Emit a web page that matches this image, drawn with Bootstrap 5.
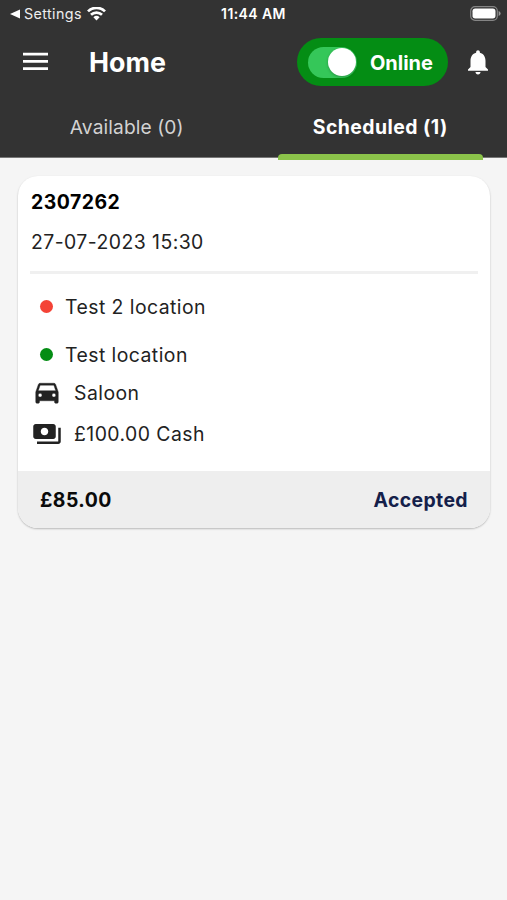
<!DOCTYPE html>
<html lang="en">
<head>
<meta charset="utf-8">
<meta name="viewport" content="width=device-width, initial-scale=1">
<title>Home</title>
<link href="https://cdn.jsdelivr.net/npm/bootstrap@5.3.0/dist/css/bootstrap.min.css" rel="stylesheet">
<style>
  body { font-family: Inter, "Liberation Sans", sans-serif; background: #f5f5f5; color: #222; min-height: 100vh; overflow-x: hidden; }
  svg { display: block; flex: none; }
  .top-area { background: #333; color: #fff; height: 158px; border-bottom: 1px solid #777; }
  .status-row { height: 28px; padding: 0 6px 0 10px; font-size: 14px; line-height: 28px; }
  .status-row > div { flex: 1 1 0; }
  .back-app { color: #eee; letter-spacing: .4px; font-size: 14.3px; }
  .clock { font-weight: 600; font-size: 14px; letter-spacing: .4px; margin-right: 4px; }
  .wifi { margin-left: 5px; }
  .app-row { height: 68px; padding: 0 14px 0 19px; }
  .page-title { font-size: 26.8px; font-weight: 700; margin: 0 0 0 38px; line-height: 32px; }
  .online-pill { width: 151px; height: 48px; border-radius: 24px; background: #048d14; padding: 0 15px 0 11px; font-size: 20px; font-weight: 700; }
  .online-text { padding-top: 1px; }
  .toggle-track { width: 49px; height: 31px; border-radius: 16px; background: #35c759; padding-right: 1px; }
  .toggle-thumb { width: 28px; height: 28px; border-radius: 50%; background: #fff; box-shadow: 0 1px 3px rgba(0,0,0,.25); }
  .bell { margin-left: 15px; }
  .tab-row { height: 62px; }
  .tab-row .nav-link { color: #d2d2d2; font-size: 19.2px; letter-spacing: .1px; line-height: 24px; padding: 19px 0 0; height: 62px; }
  .tab-row .nav-link.active { color: #fff; font-weight: 700; font-size: 19.4px; letter-spacing: .45px; }
  .tab-line { height: 6px; width: 205px; background: #8bc34a; border-radius: 4px 4px 0 0; margin: 15px auto 0; position: relative; }
  .job-card { margin: 18px 17px 0 18px; border: 0; border-radius: 20px; box-shadow: 0 1px 2px rgba(0,0,0,.25); overflow: hidden; font-size: 19.4px; letter-spacing: .45px; line-height: 24px; color: #222; }
  .job-top { height: 295px; padding: 14px 12px 0 12px; }
  .job-id, .job-date { padding-left: 1px; }
  .job-id { font-weight: 700; color: #000; letter-spacing: .5px; }
  .job-rule { height: 3px; background: #f0f0f0; margin-top: 17px; }
  .job-line span:last-child { padding-top: 3px; line-height: 21px; }
  .drop-off { margin-top: 20px; }
  .car-line, .pay-line { margin-top: 11px; }
  .job-line svg { margin: 0 12px 0 2px; }
  .pay-line svg { position: relative; top: 1px; }
  .dot { width: 13px; height: 13px; border-radius: 50%; margin: 0 12px 0 10px; }
  .dot-red { background: #f44336; }
  .dot-green { background: #048d14; }
  .job-foot { height: 57px; background: #eee; padding: 1px 22px 0 22px; font-weight: 700; color: #0a0a0a; }
  .state { color: #14204a; font-weight: 700; letter-spacing: .4px; }
</style>
</head>
<body>
<header class="top-area">
  <div class="status-row d-flex align-items-center">
    <div class="d-flex align-items-center">
      <svg width="10" height="10" viewBox="0 0 10 10"><path d="M0 5 10 .5v9z" fill="#fff"/></svg>
      <span class="back-app ms-1">Settings</span>
      <svg class="wifi" width="19" height="15" viewBox="0 0 19 15" fill="none" stroke="#fff" stroke-width="2.7"><path d="M1 4.4a12 12 0 0 1 17 0M4 7.8a7.8 7.8 0 0 1 11 0"/><path d="M9.5 13.5 6.4 10.3a4.5 4.5 0 0 1 6.2 0z" fill="#fff" stroke="none"/></svg>
    </div>
    <span class="clock">11:44 AM</span>
    <div class="d-flex justify-content-end">
      <svg width="31" height="17" viewBox="0 0 31 17"><rect x=".7" y=".7" width="26.6" height="13.6" rx="4.3" fill="none" stroke="#858585" stroke-width="1.2"/><rect x="2.5" y="2.5" width="23" height="10" rx="2.7" fill="#fff"/><path d="M28.6 5q2 .6 2 2.5t-2 2.5z" fill="#999"/></svg>
    </div>
  </div>
  <div class="app-row d-flex align-items-center">
    <svg width="32" height="32" viewBox="0 0 32 32" fill="#fff"><path d="M4 6.8h25v2.7H4zM4 14h25v2.7H4zM4 21.2h25v2.7H4z"/></svg>
    <h1 class="page-title">Home</h1>
    <div class="online-pill d-flex align-items-center justify-content-between ms-auto">
      <div class="toggle-track d-flex align-items-center justify-content-end"><div class="toggle-thumb"></div></div>
      <span class="online-text">Online</span>
    </div>
    <svg class="bell" width="30" height="30" viewBox="0 0 24 24" fill="#fff"><path d="M12 22c1.1 0 2-.9 2-2h-4c0 1.1.89 2 2 2zm6-6v-5c0-3.07-1.64-5.64-4.5-6.32V4c0-.83-.67-1.5-1.5-1.5s-1.5.67-1.5 1.5v.68C7.63 5.36 6 7.92 6 11v5l-2 2v1h16v-1z"/></svg>
  </div>
  <nav class="tab-row nav nav-justified flex-nowrap">
    <a class="nav-link col-6" href="#">Available (0)</a>
    <a class="nav-link col-6 active" href="#">Scheduled (1)<div class="tab-line"></div></a>
  </nav>
</header>
<main>
  <div class="card job-card">
    <div class="job-top">
      <div class="job-id">2307262</div>
      <div class="job-date mt-3">27-07-2023 15:30</div>
      <div class="job-rule"></div>
      <div class="job-line drop-off d-flex align-items-center"><span class="dot dot-red"></span><span>Test 2 location</span></div>
      <div class="job-line d-flex align-items-center mt-4"><span class="dot dot-green"></span><span>Test location</span></div>
      <div class="job-line car-line d-flex align-items-center"><svg width="30" height="30" viewBox="0 0 24 24" fill="#222"><path stroke="#222" stroke-width=".35" d="M18.92 6.01C18.72 5.42 18.16 5 17.5 5h-11c-.66 0-1.21.42-1.42 1.01L3 12v8c0 .55.45 1 1 1h1c.55 0 1-.45 1-1v-1h12v1c0 .55.45 1 1 1h1c.55 0 1-.45 1-1v-8zM6.5 16c-.83 0-1.5-.67-1.5-1.5S5.67 13 6.5 13s1.5.67 1.5 1.5S7.33 16 6.5 16zm11 0c-.83 0-1.5-.67-1.5-1.5s.67-1.5 1.5-1.5 1.5.67 1.5 1.5-.67 1.5-1.5 1.5zM5 11l1.5-4.5h11L19 11z"/></svg><span>Saloon</span></div>
      <div class="job-line pay-line d-flex align-items-center"><svg width="30" height="30" viewBox="0 0 24 24" fill="#222"><path d="M19 14V6c0-1.1-.9-2-2-2H3c-1.1 0-2 .9-2 2v8c0 1.1.9 2 2 2h14c1.1 0 2-.9 2-2zm-9-1c-1.66 0-3-1.34-3-3s1.34-3 3-3 3 1.34 3 3-1.34 3-3 3zm13-6v11c0 1.1-.9 2-2 2H4v-2h17V7z"/></svg><span>£100.00 Cash</span></div>
    </div>
    <div class="job-foot d-flex align-items-center justify-content-between"><span>£85.00</span><span class="state">Accepted</span></div>
  </div>
</main>
<script src="https://cdn.jsdelivr.net/npm/bootstrap@5.3.0/dist/js/bootstrap.bundle.min.js"></script>
</body>
</html>
